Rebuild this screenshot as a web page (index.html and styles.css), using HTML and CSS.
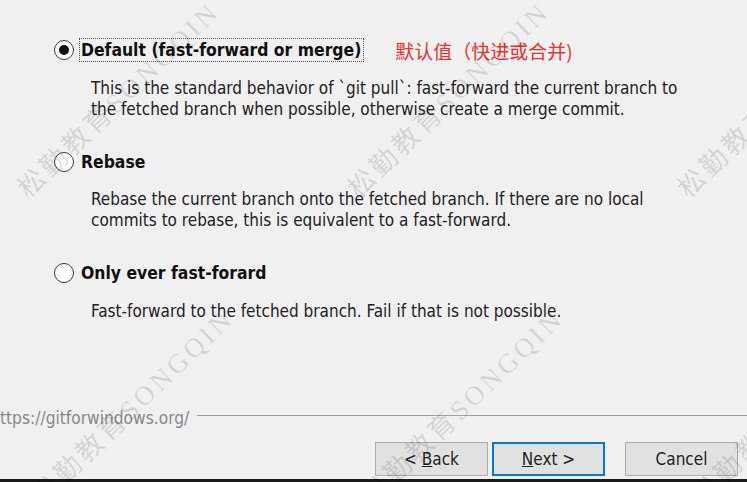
FILE: index.html
```html
<!DOCTYPE html>
<html lang="en">
<head>
    <meta charset="UTF-8">
    <title>Git pull behavior</title>
    <link rel="stylesheet" href="styles.css">
</head>
<body>
<div class="page">
    <div class="options">
        <div class="option">
            <div class="option-head">
                <span class="radio checked"></span>
                <span class="label focused">Default (fast-forward or merge)</span>
                <span class="note">默认值（快进或合并)</span>
            </div>
            <p class="desc">This is the standard behavior of `git pull`: fast-forward the current branch to<br>the fetched branch when possible, otherwise create a merge commit.</p>
        </div>
        <div class="option">
            <div class="option-head">
                <span class="radio"></span>
                <span class="label">Rebase</span>
            </div>
            <p class="desc">Rebase the current branch onto the fetched branch. If there are no local<br>commits to rebase, this is equivalent to a fast-forward.</p>
        </div>
        <div class="option">
            <div class="option-head">
                <span class="radio"></span>
                <span class="label">Only ever fast-forard</span>
            </div>
            <p class="desc">Fast-forward to the fetched branch. Fail if that is not possible.</p>
        </div>
    </div>

    <div class="footer-line">
        <span class="url">ttps://gitforwindows.org/</span>
        <span class="rule"></span>
    </div>

    <div class="buttons">
        <button class="btn">&lt; <u>B</u>ack</button>
        <button class="btn default"><u>N</u>ext &gt;</button>
        <button class="btn cancel">Cancel</button>
    </div>
    <div class="bottom-edge"></div>

    <!-- watermark overlay -->
    <div class="watermarks">
        <span class="wm" style="left: 32px; top: 203px;">松勤教育SONGQIN</span>
        <span class="wm" style="left: 362px; top: 203px;">松勤教育SONGQIN</span>
        <span class="wm" style="left: 692px; top: 203px;">松勤教育SONGQIN</span>
        <span class="wm" style="left: 46px; top: 510px;">松勤教育SONGQIN</span>
        <span class="wm" style="left: 376px; top: 510px;">松勤教育SONGQIN</span>
        <span class="wm" style="left: 706px; top: 510px;">松勤教育SONGQIN</span>
    </div>
</div>
</body>
</html>
```

FILE: styles.css
```css
html, body {
    margin: 0;
    padding: 0;
}

body {
    background-color: #f0f0f0;
    font-family: "DejaVu Sans Condensed", "Liberation Sans", sans-serif;
    color: #1e1e1e;
    overflow: hidden;
}

.page {
    position: relative;
    width: 747px;
    height: 482px;
    display: flex;
    flex-direction: column;
}

.options {
    padding: 38px 0 0 54px;
    display: flex;
    flex-direction: column;
    gap: 30px;
    height: 367px;
    box-sizing: border-box;
}

.option-head {
    display: flex;
    align-items: center;
    height: 24px;
}

.radio {
    width: 18px;
    height: 18px;
    border: 1px solid #3a3a3a;
    border-radius: 50%;
    background-color: #fff;
    display: flex;
    align-items: center;
    justify-content: center;
    margin-right: 5px;
}

.radio.checked::after {
    content: "";
    width: 10px;
    height: 10px;
    border-radius: 50%;
    background-color: #111;
}

.label {
    font-size: 17.4px;
    font-weight: bold;
    color: #111;
    padding: 0 2px 0 1px;
    line-height: 22px;
    border: 1px dotted transparent;
}

.label.focused {
    border-color: #555;
}

.note {
    margin-left: 31px;
    color: #e8322d;
    font-size: 19px;
    font-family: "Noto Sans CJK SC", sans-serif;
}

.desc {
    margin: 15.5px 0 0 37px;
    font-size: 17px;
    line-height: 21px;
    color: #222;
}

.footer-line {
    display: flex;
    align-items: center;
    height: 22px;
    margin-top: 37px;
}

.url {
    font-size: 17.2px;
    color: #888;
    padding-top: 6px;
}

.rule {
    flex: 1;
    height: 1px;
    background-color: #a0a0a0;
    margin-left: 8px;
}

.buttons {
    display: flex;
    justify-content: flex-end;
    margin-top: 16px;
    padding-right: 9px;
}

.btn {
    width: 113px;
    height: 34px;
    background-color: #e1e1e1;
    border: 1px solid #adadad;
    font-family: "DejaVu Sans Condensed", "Liberation Sans", sans-serif;
    font-size: 17px;
    color: #222;
    margin-left: 4px;
    padding: 0;
}

.btn.default {
    border: 2px solid #0078d7;
}

.btn.cancel {
    margin-left: 20px;
}

.bottom-edge {
    margin-top: auto;
    height: 3px;
    background-color: #1a1a1a;
}

.watermarks {
    position: absolute;
    inset: 0;
    pointer-events: none;
    overflow: hidden;
}

.wm {
    position: absolute;
    white-space: nowrap;
    font-family: "Liberation Serif", "Noto Sans CJK SC", serif;
    font-size: 27px;
    letter-spacing: 3.5px;
    line-height: 27px;
    color: rgba(0, 0, 0, 0.12);
    transform-origin: 0 100%;
    transform: translateY(-27px) rotate(-44deg);
}
```
